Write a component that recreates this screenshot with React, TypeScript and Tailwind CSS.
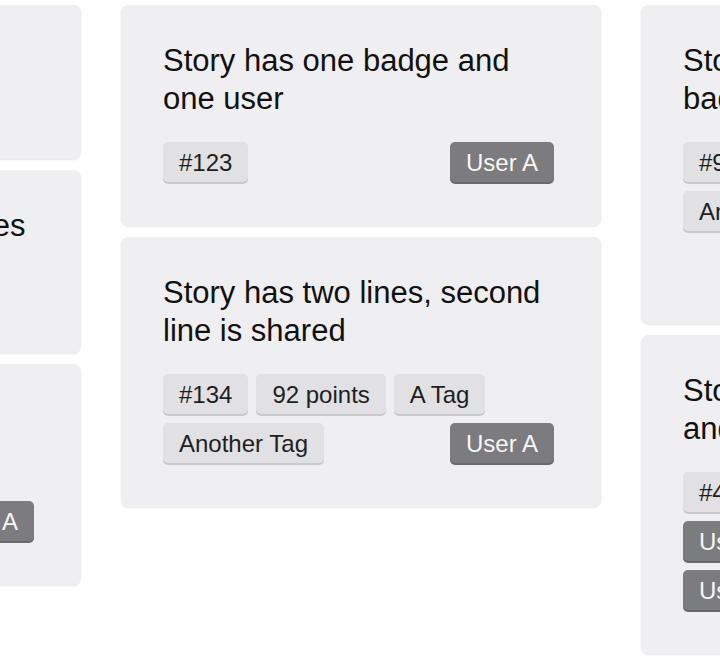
import React from "react";

type Badge = { label: string; user?: boolean; wide?: boolean };
type Story = { title: string; badges: Badge[]; className?: string };

const columns: Story[][] = [
  [
    { title: "Story has no badges\nat all", badges: [], className: "h-[154px]" },
    { title: "Story has some tiny badges", badges: [{ label: "#77" }, { label: "Tag" }] },
    {
      title: "Story has a user\nand one badge",
      badges: [{ label: "#101" }, { label: "User A", user: true }],
    },
  ],
  [
    {
      title: "Story has one badge and one user",
      badges: [{ label: "#123" }, { label: "User A", user: true }],
    },
    {
      title: "Story has two lines, second line is shared",
      badges: [
        { label: "#134" },
        { label: "92 points" },
        { label: "A Tag" },
        { label: "Another Tag" },
        { label: "User A", user: true },
      ],
    },
  ],
  [
    {
      title: "Story has multiple tags and badges",
      badges: [
        { label: "#99" },
        { label: "120 points" },
        { label: "A Tag" },
        { label: "Another Tag" },
        { label: "Yet Another Tag" },
        { label: "User A", user: true },
      ],
    },
    {
      title: "Story has a single badge and two users",
      badges: [
        { label: "#42" },
        { label: "User B with a rather long display name", user: true, wide: true },
        { label: "User C with a rather long display name", user: true, wide: true },
      ],
    },
  ],
];

function Pill({ badge }: { badge: Badge }) {
  const base =
    "rounded-[5px] px-4 pt-[7px] pb-[5px] text-[24px] leading-[28px] whitespace-nowrap";
  if (badge.user) {
    return (
      <span
        className={`${base} ${badge.wide ? "w-full overflow-hidden text-ellipsis" : "ml-auto"} bg-[#7c7b7e] text-[#f6f6f6] shadow-[0_2px_0_#6a696c]`}
      >
        {badge.label}
      </span>
    );
  }
  return (
    <span className={`${base} bg-[#e1e0e3] text-[#1e1e1e] shadow-[0_2px_0_#c9c8cb]`}>
      {badge.label}
    </span>
  );
}

function Card({ story }: { story: Story }) {
  return (
    <div
      className={`rounded-lg bg-[#efeef0] pt-[37px] pl-[42px] pr-[47px] pb-[44px] shadow-[0_1px_2px_rgba(0,0,0,0.10)] ${story.className ?? ""}`}
    >
      <div className="whitespace-pre-line text-[31px] leading-[38px] text-[#111111]">
        {story.title}
      </div>
      {story.badges.length > 0 && (
        <div className="mt-6 flex flex-wrap gap-x-2 gap-y-[9px]">
          {story.badges.map((b, i) => (
            <Pill key={i} badge={b} />
          ))}
        </div>
      )}
    </div>
  );
}

export default function App() {
  return (
    <div
      className="h-[660px] w-[720px] overflow-hidden bg-white"
      style={{ fontFamily: '"Liberation Sans", Arial, Helvetica, sans-serif' }}
    >
      <div className="ml-[-399px] flex items-start gap-10 pt-[5px]">
        {columns.map((col, ci) => (
          <div key={ci} className="flex w-[480px] shrink-0 flex-col gap-[11px]">
            {col.map((s, si) => (
              <Card key={si} story={s} />
            ))}
          </div>
        ))}
      </div>
    </div>
  );
}
